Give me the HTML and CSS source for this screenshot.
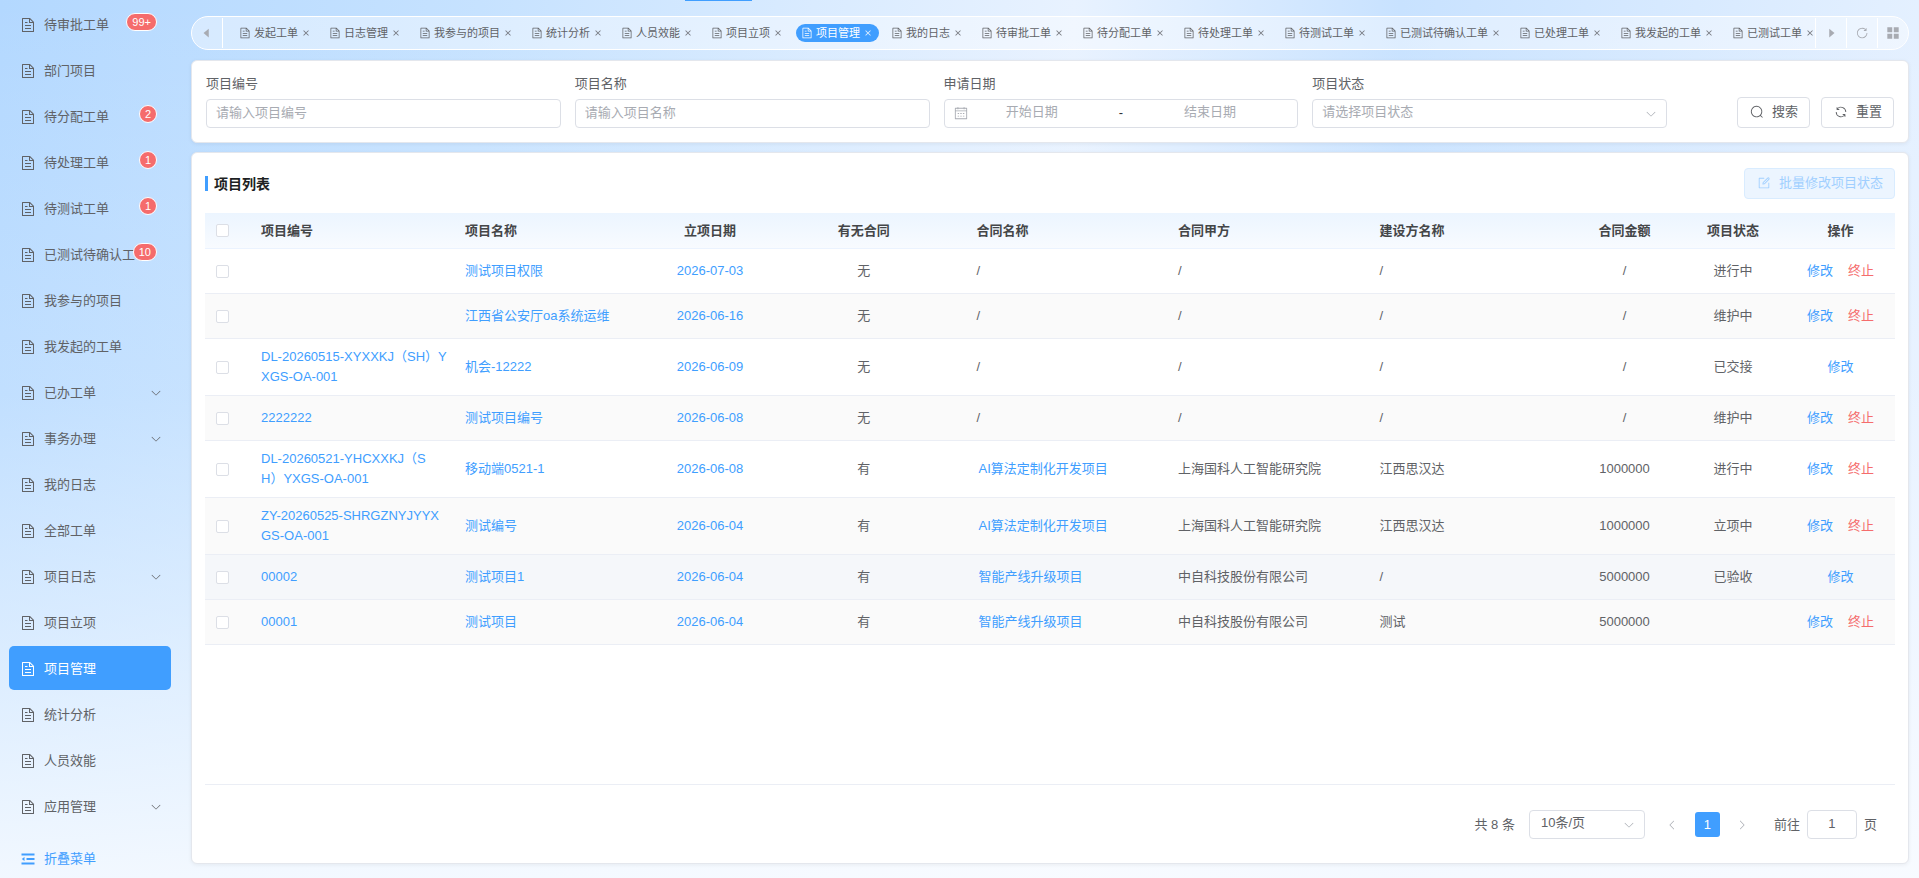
FILE: index.html
```html
<!DOCTYPE html>
<html lang="zh-CN">
<head>
    <meta charset="UTF-8">
    <title>项目管理</title>
    <link rel="stylesheet" href="styles.css">
</head>
<body>

    <!-- icon sprite -->
    <svg class="sprite" aria-hidden="true">
        <symbol id="doc" viewBox="0 0 1024 1024"><path d="M832 384H576V128H192v768h640V384zm-26.496-64L640 154.496V320h165.504zM160 64h480l256 256v608a32 32 0 0 1-32 32H160a32 32 0 0 1-32-32V96a32 32 0 0 1 32-32zm160 448h384v64H320v-64zm0-192h160v64H320v-64zm0 384h384v64H320v-64z"/></symbol>
        <symbol id="down" viewBox="0 0 1024 1024"><path d="M831.872 340.864 512 652.672 192.128 340.864a30.592 30.592 0 0 0-42.752 0 29.12 29.12 0 0 0 0 41.6L489.664 714.24a32 32 0 0 0 44.672 0l340.288-331.712a29.12 29.12 0 0 0 0-41.728 30.592 30.592 0 0 0-42.752 0z"/></symbol>
        <symbol id="close" viewBox="0 0 1024 1024"><path d="M764.288 214.592 512 466.88 259.712 214.592a31.936 31.936 0 0 0-45.12 45.12L466.752 512 214.528 764.224a31.936 31.936 0 1 0 45.12 45.184L512 557.184l252.288 252.288a31.936 31.936 0 0 0 45.12-45.12L557.12 512.064l252.288-252.352a31.936 31.936 0 1 0-45.12-45.184z"/></symbol>
        <symbol id="search" viewBox="0 0 1024 1024"><path d="m795.904 750.72 124.992 124.928a32 32 0 0 1-45.248 45.248L750.656 795.904a416 416 0 1 1 45.248-45.248zM480 832a352 352 0 1 0 0-704 352 352 0 0 0 0 704z"/></symbol>
        <symbol id="refresh" viewBox="0 0 1024 1024"><path d="M771.776 794.88A384 384 0 0 1 128 512h64a320 320 0 0 0 555.712 216.448H654.72a32 32 0 1 1 0-64h149.056a32 32 0 0 1 32 32v148.928a32 32 0 1 1-64 0v-50.56zM276.288 295.616h92.992a32 32 0 0 1 0 64H220.16a32 32 0 0 1-32-32V178.56a32 32 0 0 1 64 0v50.56A384 384 0 0 1 896.128 512h-64a320 320 0 0 0-555.776-216.384z"/></symbol>
        <symbol id="reload" viewBox="0 0 1024 1024"><path d="M784.512 230.272v-50.56a32 32 0 1 1 64 0v149.056a32 32 0 0 1-32 32H667.52a32 32 0 1 1 0-64h92.992A320 320 0 1 0 524.8 833.152a320 320 0 0 0 320-320h64a384 384 0 0 1-384 384 384 384 0 0 1-384-384 384 384 0 0 1 643.712-282.88z"/></symbol>
        <symbol id="edit" viewBox="0 0 1024 1024"><path d="M832 512a32 32 0 1 1 64 0v352a32 32 0 0 1-32 32H160a32 32 0 0 1-32-32V160a32 32 0 0 1 32-32h352a32 32 0 0 1 0 64H192v640h640V512z"/><path d="m469.952 554.24 52.8-7.552L847.104 222.4a32 32 0 1 0-45.248-45.248L477.44 501.44l-7.552 52.8zm422.4-422.4a96 96 0 0 1 0 135.808l-331.84 331.84a32 32 0 0 1-18.112 9.088L436.8 623.68a32 32 0 0 1-36.224-36.224l15.104-105.6a32 32 0 0 1 9.024-18.112l331.904-331.84a96 96 0 0 1 135.744 0z"/></symbol>
        <symbol id="calendar" viewBox="0 0 1024 1024"><path d="M128 384v512h768V192H768v32a32 32 0 1 1-64 0v-32H320v32a32 32 0 0 1-64 0v-32H128v128h768v64H128zm192-256h384V96a32 32 0 1 1 64 0v32h160a32 32 0 0 1 32 32v768a32 32 0 0 1-32 32H96a32 32 0 0 1-32-32V160a32 32 0 0 1 32-32h160V96a32 32 0 0 1 64 0v32zm-32 384h64a32 32 0 0 1 0 64h-64a32 32 0 0 1 0-64zm0 192h64a32 32 0 1 1 0 64h-64a32 32 0 1 1 0-64zm192-192h64a32 32 0 0 1 0 64h-64a32 32 0 0 1 0-64zm0 192h64a32 32 0 1 1 0 64h-64a32 32 0 1 1 0-64zm192-192h64a32 32 0 1 1 0 64h-64a32 32 0 1 1 0-64zm0 192h64a32 32 0 1 1 0 64h-64a32 32 0 1 1 0-64z"/></symbol>
        <symbol id="fold" viewBox="0 0 1024 1024"><path d="M928 160H96v128h832V160zM928 448H416v128h512V448zM928 736H96v128h832V736zM288 384 112 512l176 128V384z"/></symbol>
        <symbol id="caret" viewBox="0 0 1024 1024"><path d="M384 192v640l384-320.064z"/></symbol>
        <symbol id="grid" viewBox="0 0 1024 1024"><path d="M96 96h360v360H96zM568 96h360v360H568zM96 568h360v360H96zM568 568h360v360H568z"/></symbol>
    </svg>

    <div class="layout">
        <aside class="sidebar">
            <nav class="menu">
                <a class="menu__item" href="#"><svg class="icon"><use href="#doc"/></svg><span class="menu__text">待审批工单</span><span class="badge">99+</span></a>
                <a class="menu__item" href="#"><svg class="icon"><use href="#doc"/></svg><span class="menu__text">部门项目</span></a>
                <a class="menu__item" href="#"><svg class="icon"><use href="#doc"/></svg><span class="menu__text">待分配工单</span><span class="badge">2</span></a>
                <a class="menu__item" href="#"><svg class="icon"><use href="#doc"/></svg><span class="menu__text">待处理工单</span><span class="badge">1</span></a>
                <a class="menu__item" href="#"><svg class="icon"><use href="#doc"/></svg><span class="menu__text">待测试工单</span><span class="badge">1</span></a>
                <a class="menu__item" href="#"><svg class="icon"><use href="#doc"/></svg><span class="menu__text">已测试待确认工单</span><span class="badge">10</span></a>
                <a class="menu__item" href="#"><svg class="icon"><use href="#doc"/></svg><span class="menu__text">我参与的项目</span></a>
                <a class="menu__item" href="#"><svg class="icon"><use href="#doc"/></svg><span class="menu__text">我发起的工单</span></a>
                <a class="menu__item" href="#"><svg class="icon"><use href="#doc"/></svg><span class="menu__text">已办工单</span><svg class="menu__arrow"><use href="#down"/></svg></a>
                <a class="menu__item" href="#"><svg class="icon"><use href="#doc"/></svg><span class="menu__text">事务办理</span><svg class="menu__arrow"><use href="#down"/></svg></a>
                <a class="menu__item" href="#"><svg class="icon"><use href="#doc"/></svg><span class="menu__text">我的日志</span></a>
                <a class="menu__item" href="#"><svg class="icon"><use href="#doc"/></svg><span class="menu__text">全部工单</span></a>
                <a class="menu__item" href="#"><svg class="icon"><use href="#doc"/></svg><span class="menu__text">项目日志</span><svg class="menu__arrow"><use href="#down"/></svg></a>
                <a class="menu__item" href="#"><svg class="icon"><use href="#doc"/></svg><span class="menu__text">项目立项</span></a>
                <a class="menu__item menu__item--active" href="#"><svg class="icon"><use href="#doc"/></svg><span class="menu__text">项目管理</span></a>
                <a class="menu__item" href="#"><svg class="icon"><use href="#doc"/></svg><span class="menu__text">统计分析</span></a>
                <a class="menu__item" href="#"><svg class="icon"><use href="#doc"/></svg><span class="menu__text">人员效能</span></a>
                <a class="menu__item" href="#"><svg class="icon"><use href="#doc"/></svg><span class="menu__text">应用管理</span><svg class="menu__arrow"><use href="#down"/></svg></a>
            </nav>
            <button class="sidebar__fold" type="button"><svg class="icon"><use href="#fold"/></svg>折叠菜单</button>
        </aside>

        <main class="main">
            <div class="topline"></div>

            <div class="tabs">
                <button class="tabs__tool tabs__tool--prev" type="button" aria-label="向左"><svg><use href="#caret"/></svg></button>
                <div class="tabs__list">
                    <a class="tab" href="#"><svg class="tab__icon"><use href="#doc"/></svg>发起工单<svg class="tab__close"><use href="#close"/></svg></a>
                    <a class="tab" href="#"><svg class="tab__icon"><use href="#doc"/></svg>日志管理<svg class="tab__close"><use href="#close"/></svg></a>
                    <a class="tab" href="#"><svg class="tab__icon"><use href="#doc"/></svg>我参与的项目<svg class="tab__close"><use href="#close"/></svg></a>
                    <a class="tab" href="#"><svg class="tab__icon"><use href="#doc"/></svg>统计分析<svg class="tab__close"><use href="#close"/></svg></a>
                    <a class="tab" href="#"><svg class="tab__icon"><use href="#doc"/></svg>人员效能<svg class="tab__close"><use href="#close"/></svg></a>
                    <a class="tab" href="#"><svg class="tab__icon"><use href="#doc"/></svg>项目立项<svg class="tab__close"><use href="#close"/></svg></a>
                    <a class="tab tab--active" href="#"><svg class="tab__icon"><use href="#doc"/></svg>项目管理<svg class="tab__close"><use href="#close"/></svg></a>
                    <a class="tab" href="#"><svg class="tab__icon"><use href="#doc"/></svg>我的日志<svg class="tab__close"><use href="#close"/></svg></a>
                    <a class="tab" href="#"><svg class="tab__icon"><use href="#doc"/></svg>待审批工单<svg class="tab__close"><use href="#close"/></svg></a>
                    <a class="tab" href="#"><svg class="tab__icon"><use href="#doc"/></svg>待分配工单<svg class="tab__close"><use href="#close"/></svg></a>
                    <a class="tab" href="#"><svg class="tab__icon"><use href="#doc"/></svg>待处理工单<svg class="tab__close"><use href="#close"/></svg></a>
                    <a class="tab" href="#"><svg class="tab__icon"><use href="#doc"/></svg>待测试工单<svg class="tab__close"><use href="#close"/></svg></a>
                    <a class="tab" href="#"><svg class="tab__icon"><use href="#doc"/></svg>已测试待确认工单<svg class="tab__close"><use href="#close"/></svg></a>
                    <a class="tab" href="#"><svg class="tab__icon"><use href="#doc"/></svg>已处理工单<svg class="tab__close"><use href="#close"/></svg></a>
                    <a class="tab" href="#"><svg class="tab__icon"><use href="#doc"/></svg>我发起的工单<svg class="tab__close"><use href="#close"/></svg></a>
                    <a class="tab" href="#"><svg class="tab__icon"><use href="#doc"/></svg>已测试工单<svg class="tab__close"><use href="#close"/></svg></a>
                </div>
                <button class="tabs__tool" type="button" aria-label="向右"><svg><use href="#caret"/></svg></button>
                <button class="tabs__tool" type="button" aria-label="刷新"><svg><use href="#reload"/></svg></button>
                <button class="tabs__tool" type="button" aria-label="更多"><svg><use href="#grid"/></svg></button>
            </div>

            <form class="card filter">
                <div class="field">
                    <label class="field__label" for="code">项目编号</label>
                    <input class="field__control" id="code" type="text" placeholder="请输入项目编号">
                </div>
                <div class="field">
                    <label class="field__label" for="name">项目名称</label>
                    <input class="field__control" id="name" type="text" placeholder="请输入项目名称">
                </div>
                <div class="field">
                    <label class="field__label" for="start">申请日期</label>
                    <div class="field__control range">
                        <svg class="range__icon"><use href="#calendar"/></svg>
                        <input class="range__input" id="start" type="text" placeholder="开始日期">
                        <span class="range__sep">-</span>
                        <input class="range__input" type="text" placeholder="结束日期" aria-label="结束日期">
                    </div>
                </div>
                <div class="field">
                    <label class="field__label" for="status">项目状态</label>
                    <div class="select">
                        <select class="field__control select__control select__control--empty" id="status">
                            <option>请选择项目状态</option>
                        </select>
                        <svg class="select__arrow"><use href="#down"/></svg>
                    </div>
                </div>
                <div class="filter__actions">
                    <button class="btn" type="button"><svg class="btn__icon"><use href="#search"/></svg>搜索</button>
                    <button class="btn" type="reset"><svg class="btn__icon"><use href="#refresh"/></svg>重置</button>
                </div>
            </form>

            <section class="card list">
                <div class="list__head">
                    <h2 class="list__title">项目列表</h2>
                    <button class="btn btn--primary" type="button" disabled><svg class="btn__icon"><use href="#edit"/></svg>批量修改项目状态</button>
                </div>

                <div class="list__body">
                    <table class="table">
                        <colgroup>
                            <col class="col-check">
                            <col class="col-code">
                            <col class="col-code">
                            <col class="col-date">
                            <col>
                            <col>
                            <col>
                            <col>
                            <col class="col-amount">
                            <col class="col-date">
                            <col class="col-ops">
                        </colgroup>
                        <thead>
                            <tr>
                                <th><input class="check" type="checkbox" aria-label="全选"></th>
                                <th>项目编号</th>
                                <th>项目名称</th>
                                <th class="center">立项日期</th>
                                <th class="center">有无合同</th>
                                <th>合同名称</th>
                                <th>合同甲方</th>
                                <th>建设方名称</th>
                                <th class="center">合同金额</th>
                                <th class="center">项目状态</th>
                                <th class="center">操作</th>
                            </tr>
                        </thead>
                        <tbody>
                            <tr>
                                <td><input class="check" type="checkbox" aria-label="选择"></td>
                                <td class="code"></td>
                                <td><a class="link" href="#">测试项目权限</a></td>
                                <td class="center"><a class="link" href="#">2026-07-03</a></td>
                                <td class="center">无</td>
                                <td>/</td>
                                <td>/</td>
                                <td>/</td>
                                <td class="center">/</td>
                                <td class="center">进行中</td>
                                <td class="ops"><a class="link" href="#">修改</a><a class="link link--danger" href="#">终止</a></td>
                            </tr>
                            <tr>
                                <td><input class="check" type="checkbox" aria-label="选择"></td>
                                <td class="code"></td>
                                <td><a class="link" href="#">江西省公安厅oa系统运维</a></td>
                                <td class="center"><a class="link" href="#">2026-06-16</a></td>
                                <td class="center">无</td>
                                <td>/</td>
                                <td>/</td>
                                <td>/</td>
                                <td class="center">/</td>
                                <td class="center">维护中</td>
                                <td class="ops"><a class="link" href="#">修改</a><a class="link link--danger" href="#">终止</a></td>
                            </tr>
                            <tr>
                                <td><input class="check" type="checkbox" aria-label="选择"></td>
                                <td class="code"><a class="link" href="#">DL-20260515-XYXXKJ（SH）YXGS-OA-001</a></td>
                                <td><a class="link" href="#">机会-12222</a></td>
                                <td class="center"><a class="link" href="#">2026-06-09</a></td>
                                <td class="center">无</td>
                                <td>/</td>
                                <td>/</td>
                                <td>/</td>
                                <td class="center">/</td>
                                <td class="center">已交接</td>
                                <td class="ops"><a class="link" href="#">修改</a></td>
                            </tr>
                            <tr>
                                <td><input class="check" type="checkbox" aria-label="选择"></td>
                                <td class="code"><a class="link" href="#">2222222</a></td>
                                <td><a class="link" href="#">测试项目编号</a></td>
                                <td class="center"><a class="link" href="#">2026-06-08</a></td>
                                <td class="center">无</td>
                                <td>/</td>
                                <td>/</td>
                                <td>/</td>
                                <td class="center">/</td>
                                <td class="center">维护中</td>
                                <td class="ops"><a class="link" href="#">修改</a><a class="link link--danger" href="#">终止</a></td>
                            </tr>
                            <tr>
                                <td><input class="check" type="checkbox" aria-label="选择"></td>
                                <td class="code"><a class="link" href="#">DL-20260521-YHCXXKJ（SH）YXGS-OA-001</a></td>
                                <td><a class="link" href="#">移动端0521-1</a></td>
                                <td class="center"><a class="link" href="#">2026-06-08</a></td>
                                <td class="center">有</td>
                                <td><a class="link link--contract" href="#">AI算法定制化开发项目</a></td>
                                <td>上海国科人工智能研究院</td>
                                <td>江西思汉达</td>
                                <td class="center">1000000</td>
                                <td class="center">进行中</td>
                                <td class="ops"><a class="link" href="#">修改</a><a class="link link--danger" href="#">终止</a></td>
                            </tr>
                            <tr>
                                <td><input class="check" type="checkbox" aria-label="选择"></td>
                                <td class="code"><a class="link" href="#">ZY-20260525-SHRGZNYJYYXGS-OA-001</a></td>
                                <td><a class="link" href="#">测试编号</a></td>
                                <td class="center"><a class="link" href="#">2026-06-04</a></td>
                                <td class="center">有</td>
                                <td><a class="link link--contract" href="#">AI算法定制化开发项目</a></td>
                                <td>上海国科人工智能研究院</td>
                                <td>江西思汉达</td>
                                <td class="center">1000000</td>
                                <td class="center">立项中</td>
                                <td class="ops"><a class="link" href="#">修改</a><a class="link link--danger" href="#">终止</a></td>
                            </tr>
                            <tr class="hover">
                                <td><input class="check" type="checkbox" aria-label="选择"></td>
                                <td class="code"><a class="link" href="#">00002</a></td>
                                <td><a class="link" href="#">测试项目1</a></td>
                                <td class="center"><a class="link" href="#">2026-06-04</a></td>
                                <td class="center">有</td>
                                <td><a class="link link--contract" href="#">智能产线升级项目</a></td>
                                <td>中自科技股份有限公司</td>
                                <td>/</td>
                                <td class="center">5000000</td>
                                <td class="center">已验收</td>
                                <td class="ops"><a class="link" href="#">修改</a></td>
                            </tr>
                            <tr>
                                <td><input class="check" type="checkbox" aria-label="选择"></td>
                                <td class="code"><a class="link" href="#">00001</a></td>
                                <td><a class="link" href="#">测试项目</a></td>
                                <td class="center"><a class="link" href="#">2026-06-04</a></td>
                                <td class="center">有</td>
                                <td><a class="link link--contract" href="#">智能产线升级项目</a></td>
                                <td>中自科技股份有限公司</td>
                                <td>测试</td>
                                <td class="center">5000000</td>
                                <td class="center"></td>
                                <td class="ops"><a class="link" href="#">修改</a><a class="link link--danger" href="#">终止</a></td>
                            </tr>
                        </tbody>
                    </table>
                </div>

                <div class="pager">
                    <span>共 8 条</span>
                    <div class="select pager__size">
                        <select class="field__control select__control" aria-label="每页条数">
                            <option>10条/页</option>
                        </select>
                        <svg class="select__arrow"><use href="#down"/></svg>
                    </div>
                    <div class="pager__pages">
                        <button class="pager__btn pager__btn--prev" type="button" aria-label="上一页" disabled><svg><use href="#down"/></svg></button>
                        <button class="pager__btn pager__btn--active" type="button">1</button>
                        <button class="pager__btn pager__btn--next" type="button" aria-label="下一页" disabled><svg><use href="#down"/></svg></button>
                    </div>
                    <label class="pager__jump">前往<input class="field__control pager__input" type="text" value="1">页</label>
                </div>
            </section>
        </main>
    </div>

</body>
</html>
```

FILE: styles.css
```css
* {
    box-sizing: border-box;
}

body {
    background:
        linear-gradient(to bottom, rgba(250, 252, 255, 0) 0%, rgba(250, 252, 255, 0.2) 45%, rgba(250, 252, 255, 0.88) 100%),
        linear-gradient(to right, #b3d8ff 0%, #c6e2ff 25%, #e8f2ff 56%, #c8e2ff 73%, #e4f0ff 100%);
    color: #606266;
    font-family: "Liberation Sans", "Noto Sans CJK SC", sans-serif;
    font-size: 13px;
    line-height: 20px;
    margin: 0;
}

a {
    color: inherit;
    text-decoration: none;
}

button,
input,
select {
    color: inherit;
    font: inherit;
}

button {
    background: none;
    border: 0;
    padding: 0;
}

svg {
    fill: currentColor;
    flex: none;
}

.sprite {
    display: none;
}

.icon {
    height: 16px;
    width: 16px;
}

.layout {
    display: flex;
    min-height: 100vh;
}

/* Sidebar */

.sidebar {
    flex: none;
    padding: 2px 9px;
    width: 191px;
}

.menu {
    display: flex;
    flex-direction: column;
    gap: 2px;
}

.menu__item {
    align-items: center;
    border-radius: 5px;
    display: flex;
    gap: 8px;
    height: 44px;
    margin-right: 11px;
    padding: 1px 9px 0 11px;
    position: relative;
}

.menu__item--active {
    background-color: #409eff;
    color: #fff;
}

.menu__text {
    flex: 1;
    overflow: hidden;
    white-space: nowrap;
}

.menu__arrow {
    height: 12px;
    width: 12px;
}

.badge {
    background-color: #f56c6c;
    border: 1px solid #fff;
    border-radius: 10px;
    color: #fff;
    font-size: 11px;
    line-height: 16px;
    padding: 0 5px;
    position: absolute;
    right: 14px;
    top: 11px;
}

.sidebar__fold {
    align-items: center;
    color: #409eff;
    display: flex;
    gap: 8px;
    margin-top: 19px;
    padding: 2px 11px;
}

/* Tabs */

.main {
    display: flex;
    flex: 1;
    flex-direction: column;
    min-width: 0;
    padding: 0 10px 14px 0;
}

.topline {
    background-color: #409eff;
    height: 1px;
    margin-left: 494px;
    width: 67px;
}

.tabs {
    background-color: rgba(255, 255, 255, 0.4);
    border: 1px solid #fff;
    border-radius: 17px;
    display: flex;
    height: 34px;
    margin: 15px 0 10px;
    padding: 1px 0;
}

.tabs__tool {
    align-items: center;
    border-left: 1px solid #fff;
    color: #a8abb2;
    display: flex;
    justify-content: center;
    width: 31px;
}

.tabs__tool svg {
    height: 14px;
    width: 14px;
}

.tabs__tool--prev {
    border-left: 0;
    border-right: 1px solid #fff;
}

.tabs__tool--prev svg {
    transform: rotate(180deg);
}

.tabs__list {
    align-items: center;
    display: flex;
    flex: 1;
    gap: 7px;
    overflow: hidden;
    padding: 0 0 1px 11px;
}

.tab {
    align-items: center;
    border-radius: 9px;
    display: flex;
    flex: none;
    font-size: 11px;
    height: 18px;
    line-height: 18px;
    padding: 0 7px 0 5px;
}

.tab--active {
    background-color: #409eff;
    color: #fff;
}

.tab__icon {
    height: 12px;
    margin-right: 3px;
    width: 12px;
}

.tab__close {
    height: 8px;
    margin-left: 4px;
    stroke: currentColor;
    stroke-width: 40;
    width: 8px;
}

/* Cards */

.card {
    background-color: #fff;
    border: 1px solid #e4e7ed;
    border-radius: 6px;
    box-shadow: 0 1px 4px rgba(0, 0, 0, 0.06);
}

.filter {
    align-items: flex-end;
    display: flex;
    gap: 14px;
    margin-bottom: 9px;
    padding: 13px 14px 14px;
}

.field {
    flex: 1;
    min-width: 0;
}

.field__label {
    display: block;
    margin-bottom: 5px;
}

.field__control {
    background-color: #fff;
    border: 1px solid #dcdfe6;
    border-radius: 4px;
    display: block;
    height: 29px;
    padding: 0 9px 3px;
    width: 100%;
}

.field__control::placeholder,
.range__input::placeholder {
    color: #a8abb2;
}

.range {
    align-items: center;
    display: flex;
    padding: 0 23px 1px 9px;
}

.range__icon {
    color: #a8abb2;
    height: 14px;
    width: 14px;
}

.range__input {
    border: 0;
    flex: 1;
    min-width: 0;
    padding: 0 0 2px;
    text-align: center;
}

.range__sep {
    color: #303133;
    text-align: center;
    width: 50px;
}

.select {
    position: relative;
}

.select__control {
    appearance: none;
    padding-bottom: 4px;
}

.select__control--empty {
    color: #a8abb2;
}

.select__arrow {
    color: #a8abb2;
    height: 12px;
    pointer-events: none;
    position: absolute;
    right: 10px;
    top: 9px;
    width: 12px;
}

.filter__actions {
    display: flex;
    gap: 11px;
    margin-left: 56px;
}

.btn {
    align-items: center;
    background-color: #fff;
    border: 1px solid #dcdfe6;
    border-radius: 4px;
    display: flex;
    gap: 8px;
    height: 31px;
    padding: 0 11px 2px 12px;
    white-space: nowrap;
}

.btn__icon {
    height: 14px;
    width: 14px;
}

.btn--primary {
    background-color: #ecf5ff;
    border-color: #d9ecff;
    color: #a0cfff;
}

/* Project list */

.list {
    display: flex;
    flex: 1;
    flex-direction: column;
    padding: 15px 13px 24px;
}

.list__head {
    align-items: center;
    display: flex;
    justify-content: space-between;
    margin-bottom: 14px;
}

.list__title {
    align-items: center;
    color: #1d1f23;
    display: flex;
    font-size: 14px;
    gap: 6px;
    margin: 0;
}

.list__title::before {
    background-color: #409eff;
    content: "";
    height: 15px;
    width: 3px;
}

.list__body {
    border-bottom: 1px solid #ebeef5;
    flex: 1;
}

.table {
    border-collapse: separate;
    border-spacing: 0;
    table-layout: fixed;
    width: 100%;
}

.col-check {
    width: 44px;
}

.col-code {
    width: 204px;
}

.col-date {
    width: 106px;
}

.col-amount {
    width: 111px;
}

.col-ops {
    width: 109px;
}

.table th,
.table td {
    border-bottom: 1px solid #ebeef5;
    padding: 8px 12px;
    text-align: left;
}

.table th {
    border-bottom-color: #ebf3ff;
    color: #444648;
    height: 36px;
    padding: 7px 12px;
}

.table thead {
    background: linear-gradient(to bottom, #ecf5ff, #f8fbff);
}

.table td {
    height: 45px;
}

.table tbody tr:nth-child(even) {
    background-color: #fafafa;
}

.table tbody .hover {
    background-color: #f5f7fa;
}

.table .center,
.table .ops {
    text-align: center;
}

.table .code {
    padding-right: 5px;
    text-spacing-trim: space-all;
    word-break: break-all;
}

.link {
    color: #409eff;
}

.link--danger {
    color: #f56c6c;
    margin-left: 15px;
}

.link--contract {
    padding-left: 2px;
}

.table .ops {
    padding: 8px 4px;
}

.check {
    appearance: none;
    background-color: #fff;
    border: 1px solid #dcdfe6;
    border-radius: 2px;
    display: block;
    height: 13px;
    margin: 0 0 0 -1px;
    width: 13px;
}

/* Pagination */

.pager {
    align-items: center;
    display: flex;
    justify-content: flex-end;
    padding: 25px 18px 0 0;
}

.pager__size {
    margin-left: 14px;
    width: 116px;
}

.pager__size .select__control {
    padding-left: 11px;
}

.pager__pages {
    display: flex;
    gap: 10px;
    margin: 0 19px 0 15px;
}

.pager__btn {
    align-items: center;
    border-radius: 3px;
    display: flex;
    height: 25px;
    justify-content: center;
    width: 25px;
}

.pager__btn svg {
    color: #a8abb2;
    height: 12px;
    width: 12px;
}

.pager__btn--prev svg {
    transform: rotate(90deg);
}

.pager__btn--next svg {
    transform: rotate(-90deg);
}

.pager__btn--active {
    background-color: #409eff;
    color: #fff;
}

.pager__jump {
    align-items: center;
    display: flex;
    gap: 7px;
}

.pager__input {
    text-align: center;
    width: 50px;
}
```
